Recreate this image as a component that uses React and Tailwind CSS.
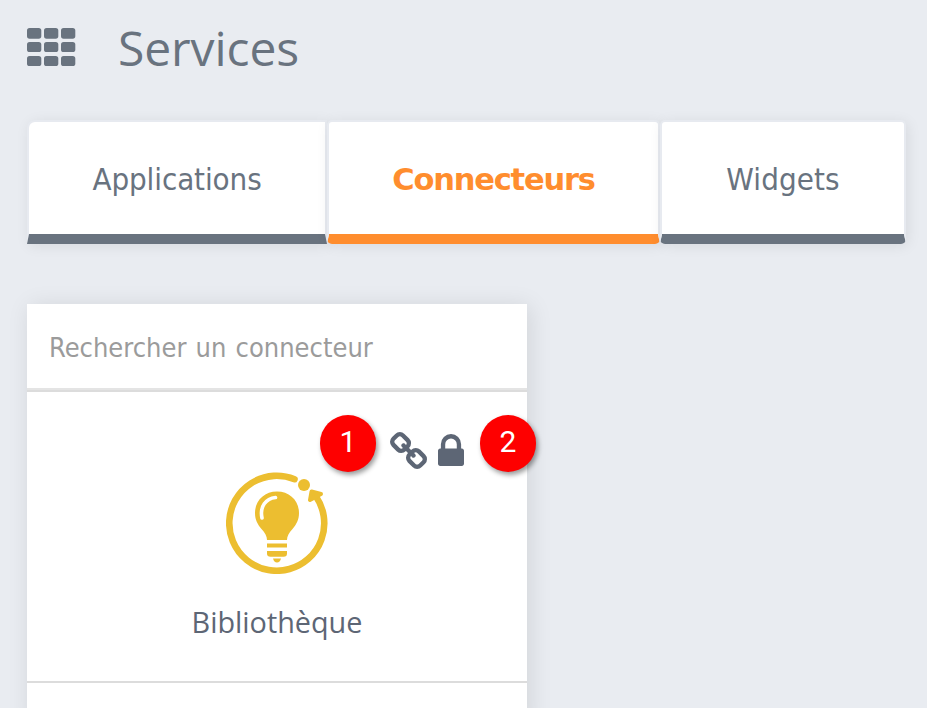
const tabs = [
  {
    label: 'Applications',
    box: 'w-[300px] rounded-tl-[8px] border-b-[#69737f] text-[#69737f]',
    text: 'tracking-[-0.1px]',
  },
  {
    label: 'Connecteurs',
    box: 'w-[333px] rounded-[5px] border-b-[#ff8d2e] text-[#ff8d2e] font-bold',
    text: "font-['DejaVu_Sans',sans-serif] text-[30.5px] tracking-[-1.2px]",
  },
  {
    label: 'Widgets',
    box: 'w-[246px] rounded-[5px] border-b-[#69737f] text-[#69737f]',
    text: 'tracking-[0.1px]',
  },
];

function GridIcon() {
  return (
    <svg width="49" height="38" viewBox="0 0 49 38" fill="#69737f">
      {[0, 14, 28].map((y) =>
        [0, 17, 34].map((x) => (
          <rect key={`${x}-${y}`} x={x} y={y} width="14.3" height={y === 0 ? 10.7 : 10} rx="2.6" />
        ))
      )}
    </svg>
  );
}

function ChainIcon() {
  return (
    <svg width="37" height="37" viewBox="16 16 1632 1632" fill="currentColor">
      <path d="M1456 1216q0-40-28-68l-208-208q-28-28-68-28-42 0-72 32 3 3 19 18.5t21.5 21.5 15 19 13 25.5 3.5 27.5q0 40-28 68t-68 28q-15 0-27.5-3.5t-25.5-13-19-15-21.5-21.5-18.5-19q-33 31-33 73 0 40 28 68l206 207q27 27 68 27 40 0 68-26l147-146q28-28 28-67zm-703-705q0-40-28-68l-206-207q-28-28-68-28-39 0-68 27l-147 146q-28 28-28 67 0 40 28 68l208 208q27 27 68 27 42 0 72-31-3-3-19-18.5t-21.5-21.5-15-19-13-25.5-3.5-27.5q0-40 28-68t68-28q15 0 27.5 3.5t25.5 13 19 15 21.5 21.5 18.5 19q33-31 33-73zm895 705q0 120-85 203l-147 146q-83 83-203 83-121 0-204-85l-206-207q-83-83-83-203 0-123 88-209l-88-88q-86 88-208 88-120 0-204-84l-208-208q-84-84-84-204t85-203l147-146q83-83 203-83 121 0 204 85l206 207q83 83 83 203 0 123-88 209l88 88q86-88 208-88 120 0 204 84l208 208q84 84 84 204z" />
    </svg>
  );
}

function LockIcon() {
  return (
    <svg width="26" height="32" viewBox="320 128 1152 1408" fill="currentColor">
      <path d="M640 768h512v-192q0-106-75-181t-181-75-181 75-75 181v192zm832 96v576q0 40-28 68t-68 28h-960q-40 0-68-28t-28-68v-576q0-40 28-68t68-28h32v-192q0-184 132-316t316-132 316 132 132 316v192h32q40 0 68 28t28 68z" />
    </svg>
  );
}

function BulbIcon() {
  return (
    <svg width="102" height="102" viewBox="0 0 102 102" fill="#ecbe30">
      {/* ring, dot and arrow head */}
      <path d="M68.5 7.2A47.5 47.5 0 1 0 90 24.5" fill="none" stroke="#ecbe30" strokeWidth="6.6" strokeLinecap="round" />
      <circle cx="78" cy="13" r="6" />
      <path d="M85.5 19.5L95 22L84 28Z" stroke="#ecbe30" strokeWidth="4" strokeLinejoin="round" />
      {/* bulb */}
      <path d="M51 19.5C38.5 19.5 29 28.5 29 41C29 48 31.5 52 35.5 57C39 61 41 64 41 68H61C61 64 63 61 66.5 57C70.5 52 73 48 73 41C73 28.5 63.5 19.5 51 19.5Z" />
      <path d="M36 46C33.5 34.5 40 26.5 49.5 25.5" fill="none" stroke="#fff" strokeWidth="3.6" strokeLinecap="round" />
      <rect x="41" y="71.5" width="20" height="4" />
      <path d="M41 79H61V81.5Q61 84.8 57.5 84.8H44.5Q41 84.8 41 81.5Z" />
      <path d="M47 86.5H55Q54 90.5 51 90.5Q48 90.5 47 86.5Z" />
    </svg>
  );
}

function Marker({ children, className }) {
  return (
    <div className={`absolute top-[23px] w-[56.5px] h-[56.5px] rounded-full bg-[#fe0000] text-white font-['Roboto',sans-serif] text-[30px] leading-[53px] text-center shadow-[2px_3px_5px_rgba(0,0,0,0.4)] ${className}`}>
      {children}
    </div>
  );
}

export default function App() {
  return (
    <div className="h-[708px] overflow-hidden bg-[#e9ecf1] font-['Open_Sans','Noto_Sans',sans-serif]">
      <header className="h-[120px] pl-[27px] pt-[28px] flex items-start">
        <GridIcon />
        <h1 className="ml-[42px] -mt-[12px] text-[48px] leading-[64px] tracking-[-0.1px] text-[#69737f]">Services</h1>
      </header>

      <nav className="ml-[27px] h-[124px] flex font-['DejaVu_Sans_Condensed','DejaVu_Sans',sans-serif]">
        {tabs.map((tab) => (
          <button
            key={tab.label}
            className={`h-full shrink-0 flex items-center justify-center pt-[3px] bg-white border-2 border-b-[10px] border-[#e7eaf0] text-[31px] shadow-[2px_2px_14px_rgba(0,0,0,0.08)] ${tab.box}`}
          >
            <span className={`whitespace-nowrap ${tab.text}`}>{tab.label}</span>
          </button>
        ))}
      </nav>

      <main className="ml-[27px] mt-[60px] w-[500px] h-[420px] bg-white shadow-[3px_2px_22px_rgba(0,0,0,0.1)]">
        <div className="h-[86px] border-b-2 border-[#e4e4e4]">
          <input
            className="w-full h-full px-[22px] pt-[2px] outline-none font-['DejaVu_Sans_Condensed','DejaVu_Sans',sans-serif] text-[27px] tracking-[0px] [word-spacing:1.5px] placeholder:text-[#9b9b9b]"
            placeholder="Rechercher un connecteur"
          />
        </div>

        <section className="relative h-[293px] border-y-2 border-[#dcdcdc] text-[#5d6675]">
          <div className="flex items-center justify-end h-[37px] mt-[39.5px] mr-[63.5px] gap-[10.5px]">
            <ChainIcon />
            <LockIcon />
          </div>
          <div className="flex flex-col items-center mt-[3.5px]">
            <BulbIcon />
            <div className="mt-[28px] text-[28.8px] leading-[40px]">Bibliothèque</div>
          </div>
          <Marker className="left-[292.7px]">1</Marker>
          <Marker className="left-[452.7px]">2</Marker>
        </section>
      </main>
    </div>
  );
}
